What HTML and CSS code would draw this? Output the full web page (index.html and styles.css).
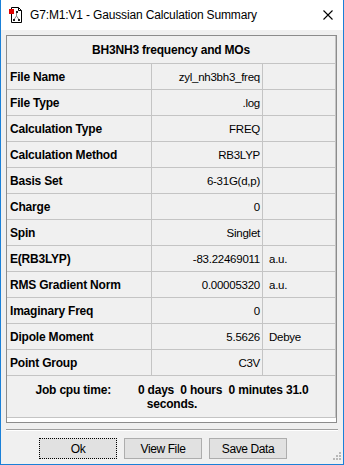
FILE: index.html
```html
<!DOCTYPE html>
<html>
<head>
<meta charset="utf-8">
<link rel="stylesheet" href="styles.css">
</head>
<body>
<div class="window">
  <div class="titlebar">
    <svg class="appicon" width="16" height="16" viewBox="0 0 16 16">
      <path d="M3.5 0.5 H10.5 L13.5 3.5 V15.5 H3.5 Z" fill="#fff" stroke="#000" stroke-width="1"/>
      <path d="M10.5 0.5 V3.5 H13.5" fill="none" stroke="#000" stroke-width="1"/>
      <rect x="1" y="2" width="5" height="5" fill="#e00000"/>
      <path d="M8.5 5 V9 M8.5 9 L6 12.5 M8.5 9 L11 12.5" stroke="#888" stroke-width="1" fill="none"/>
      <rect x="8" y="4" width="2" height="2" fill="#222"/>
      <rect x="5" y="12" width="2" height="2" fill="#222"/>
      <rect x="10" y="12" width="2" height="2" fill="#222"/>
    </svg>
    <span class="title">G7:M1:V1 - Gaussian Calculation Summary</span>
    <svg class="close" width="10" height="10" viewBox="0 0 10 10">
      <path d="M0.5 0.5 L9.5 9.5 M9.5 0.5 L0.5 9.5" stroke="#000" stroke-width="1.1" fill="none"/>
    </svg>
  </div>
  <div class="client">
    <div class="frame">
      <div class="grid">
        <div class="head">BH3NH3 frequency and MOs</div>

        <div class="lbl">File Name</div><div class="val">zyl_nh3bh3_freq</div><div class="unit"></div>
        <div class="lbl">File Type</div><div class="val">.log</div><div class="unit"></div>
        <div class="lbl">Calculation Type</div><div class="val">FREQ</div><div class="unit"></div>
        <div class="lbl">Calculation Method</div><div class="val">RB3LYP</div><div class="unit"></div>
        <div class="lbl">Basis Set</div><div class="val">6-31G(d,p)</div><div class="unit"></div>
        <div class="lbl">Charge</div><div class="val">0</div><div class="unit"></div>
        <div class="lbl">Spin</div><div class="val">Singlet</div><div class="unit"></div>
        <div class="lbl">E(RB3LYP)</div><div class="val">-83.22469011</div><div class="unit">a.u.</div>
        <div class="lbl">RMS Gradient Norm</div><div class="val">0.00005320</div><div class="unit">a.u.</div>
        <div class="lbl">Imaginary Freq</div><div class="val">0</div><div class="unit"></div>
        <div class="lbl">Dipole Moment</div><div class="val">5.5626</div><div class="unit">Debye</div>
        <div class="lbl">Point Group</div><div class="val">C3V</div><div class="unit"></div>

        <div class="job"><span class="jobline">Job cpu time:<span class="gap"></span>0 days  0 hours  0 minutes 31.0</span><span class="jobline">seconds.</span></div>
      </div>
    </div>
    <div class="sep"></div>
    <div class="buttons">
      <button class="btn default">Ok</button>
      <button class="btn">View File</button>
      <button class="btn">Save Data</button>
    </div>
    <svg class="grip" width="12" height="12" viewBox="0 0 12 12">
      <g fill="#b8b8b8">
        <rect x="9" y="1" width="2" height="2"/>
        <rect x="6" y="4" width="2" height="2"/>
        <rect x="9" y="4" width="2" height="2"/>
        <rect x="3" y="7" width="2" height="2"/>
        <rect x="6" y="7" width="2" height="2"/>
        <rect x="9" y="7" width="2" height="2"/>
      </g>
    </svg>
  </div>
</div>
</body>
</html>
```

FILE: styles.css
```css
* {
  box-sizing: border-box;
}

html, body {
  margin: 0;
  padding: 0;
  background: #f0f0f0;
}

.window {
  width: 344px;
  height: 465px;
  border-left: 1px solid #1a80d8;
  border-right: 1px solid #1a80d8;
  border-bottom: 1px solid #1a80d8;
  display: flex;
  flex-direction: column;
  font-family: "Liberation Sans", Arial, sans-serif;
  color: #000;
}

.titlebar {
  height: 30px;
  background: #fff;
  display: flex;
  align-items: center;
  position: relative;
}

.appicon {
  margin-left: 7px;
  flex: none;
}

.title {
  margin-left: 6px;
  font-size: 12px;
  letter-spacing: -0.15px;
  flex: 1;
}

.close {
  margin-right: 10px;
  flex: none;
}

.client {
  flex: 1;
  background: #f0f0f0;
  position: relative;
  display: flex;
  flex-direction: column;
}

.frame {
  margin: 5px 0 0 5px;
  width: 331px;
  height: 388px;
  border: 1px solid #8c8c8c;
  background: #fff;
}

.grid {
  display: grid;
  grid-template-columns: 145px 111px 73px;
  grid-template-rows: 28px repeat(12, 26px) 42px;
  background: #f0f0f0;
}

.grid > div {
  border-right: 1px solid #c4c4c4;
  border-bottom: 1px solid #c4c4c4;
  display: flex;
  align-items: center;
  white-space: nowrap;
  overflow: hidden;
}

.grid > .head {
  grid-column: 1 / 4;
  justify-content: center;
  font-weight: bold;
  font-size: 12px;
  letter-spacing: -0.2px;
  padding-top: 1px;
}

.lbl {
  font-weight: bold;
  font-size: 12px;
  letter-spacing: -0.2px;
  padding-left: 3px;
}

.val {
  justify-content: flex-end;
  font-size: 11.5px;
  letter-spacing: -0.25px;
  padding-right: 2px;
}

.unit {
  font-size: 11.5px;
  letter-spacing: -0.25px;
  padding-left: 6px;
}

.grid > .job {
  grid-column: 1 / 4;
  flex-direction: column;
  justify-content: center;
  align-items: center;
  font-weight: bold;
  font-size: 12px;
  letter-spacing: -0.2px;
  line-height: 14px;
  white-space: pre;
  padding-left: 2px;
}

.jobline {
  display: block;
  text-align: center;
}

.gap {
  display: inline-block;
  width: 27px;
}

.sep {
  margin: 6px 0 0 5px;
  width: 332px;
  height: 2px;
  border-top: 1px solid #a0a0a0;
  border-bottom: 1px solid #fff;
}

.buttons {
  margin: 7px 0 0 38px;
  display: flex;
  gap: 7px;
}

.btn {
  width: 78px;
  height: 21px;
  background: #e1e1e1;
  border: 1px solid #adadad;
  font-family: "Liberation Sans", Arial, sans-serif;
  font-size: 12px;
  letter-spacing: -0.4px;
  color: #000;
  padding: 0;
  margin: 0;
}

.btn.default {
  border: 1px dotted #000;
}

.grip {
  position: absolute;
  right: 1px;
  bottom: 1px;
}
```
